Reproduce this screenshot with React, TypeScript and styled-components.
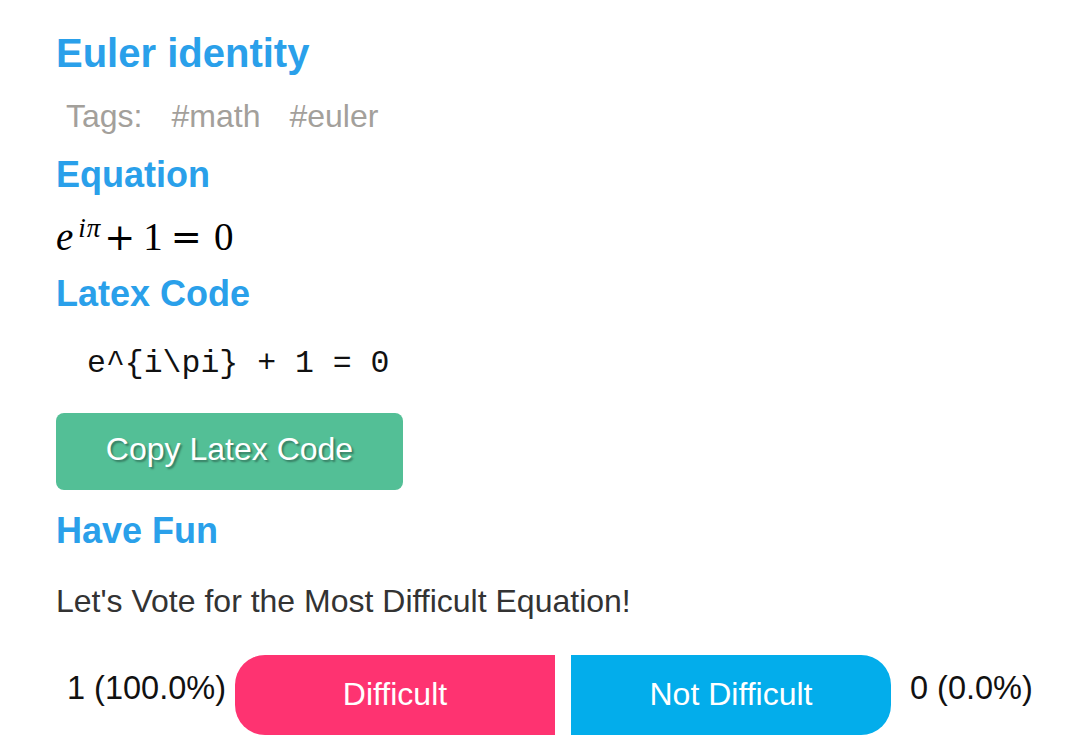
import React from "react";
import styled, { createGlobalStyle } from "styled-components";

const GlobalStyle = createGlobalStyle`
  html, body {
    margin: 0;
    padding: 0;
    background: #ffffff;
    font-family: "Liberation Sans", Arial, Helvetica, sans-serif;
  }
`;

const Page = styled.main`
  display: flex;
  flex-direction: column;
  align-items: flex-start;
  padding: 30px 0 40px 56px;
  width: 1068px;
  box-sizing: border-box;
`;

const Title = styled.h1`
  margin: 0;
  font-size: 40px;
  line-height: 46px;
  font-weight: 700;
  color: #2aa0ea;
`;

const TagRow = styled.div`
  display: flex;
  align-items: baseline;
  margin-top: 22px;
  padding-left: 10px;
  font-size: 32px;
  line-height: 36px;
  color: #a3a09b;
`;

const Tag = styled.span<{ $gap: number }>`
  margin-right: ${(p) => p.$gap}px;
`;

const Heading = styled.h2<{ $top: number }>`
  margin: ${(p) => p.$top}px 0 0 0;
  font-size: 36px;
  line-height: 42px;
  font-weight: 700;
  color: #2aa0ea;
`;

const Formula = styled.div`
  margin-top: 19px;
  font-family: "Liberation Serif", "Times New Roman", serif;
  font-size: 39px;
  line-height: 44px;
  height: 44px;
  color: #000;
  white-space: nowrap;
`;

const MathVar = styled.span`
  font-style: italic;
`;

const Sup = styled.span`
  display: inline-block;
  font-size: 27px;
  font-style: italic;
  line-height: 1;
  vertical-align: 13px;
  margin-left: 5px;
  letter-spacing: 1px;
`;

const Op = styled.span<{ $left: number; $right: number }>`
  display: inline-block;
  font-family: "DejaVu Serif", serif;
  font-size: 37px;
  margin: 0 ${(p) => p.$right}px 0 ${(p) => p.$left}px;
`;

const Digit = styled.span`
  display: inline-block;
`;

const Code = styled.pre`
  margin: 30px 0 0 0;
  padding-left: 31px;
  font-family: "Liberation Mono", "Courier New", monospace;
  font-size: 31.5px;
  line-height: 38px;
  color: #111;
`;

const CopyButton = styled.button`
  margin-top: 30px;
  width: 347px;
  height: 77px;
  border: none;
  border-radius: 8px;
  background: #53bf96;
  color: #fff;
  font-family: "Liberation Sans", Arial, sans-serif;
  font-size: 32px;
  text-shadow: 2px 2px 2px rgba(0, 0, 0, 0.35);
  cursor: pointer;
  display: flex;
  align-items: center;
  justify-content: center;
  padding: 0 0 4px 0;
`;

const Prompt = styled.p`
  margin: 31px 0 0 0;
  font-size: 32px;
  line-height: 37px;
  color: #333;
`;

const VoteRow = styled.div`
  display: flex;
  align-items: flex-start;
  margin-top: 35px;
  padding-left: 11px;
`;

const Count = styled.span<{ $ml: number; $mr: number }>`
  flex-shrink: 0;
  white-space: nowrap;
  font-size: 32.5px;
  line-height: 37px;
  color: #111;
  padding-top: 15px;
  margin-left: ${(p) => p.$ml}px;
  margin-right: ${(p) => p.$mr}px;
`;

const VoteButton = styled.button<{ $color: string; $side: "left" | "right" }>`
  flex-shrink: 0;
  width: 320px;
  height: 80px;
  border: none;
  background: ${(p) => p.$color};
  color: #fff;
  font-family: "Liberation Sans", Arial, sans-serif;
  font-size: 32px;
  border-radius: ${(p) => (p.$side === "left" ? "30px 0 0 30px" : "0 30px 30px 0")};
  margin-left: ${(p) => (p.$side === "left" ? 0 : 16)}px;
  display: flex;
  align-items: center;
  justify-content: center;
  padding: 0 0 2px 0;
  cursor: pointer;
`;

export default function App() {
  return (
    <>
      <GlobalStyle />
      <Page>
        <Title>Euler identity</Title>
        <TagRow>
          <Tag $gap={29}>Tags:</Tag>
          <Tag $gap={29}>#math</Tag>
          <Tag $gap={0}>#euler</Tag>
        </TagRow>
        <Heading $top={20}>Equation</Heading>
        <Formula>
          <MathVar>e</MathVar>
          <Sup>iπ</Sup>
          <Op $left={3} $right={8}>+</Op>
          <Digit>1</Digit>
          <Op $left={8} $right={12}>=</Op>
          <Digit>0</Digit>
        </Formula>
        <Heading $top={14}>Latex Code</Heading>
        <Code>{"e^{i\\pi} + 1 = 0"}</Code>
        <CopyButton>Copy Latex Code</CopyButton>
        <Heading $top={20}>Have Fun</Heading>
        <Prompt>Let's Vote for the Most Difficult Equation!</Prompt>
        <VoteRow>
          <Count $ml={0} $mr={9}>1 (100.0%)</Count>
          <VoteButton $color="#fe3371" $side="left">Difficult</VoteButton>
          <VoteButton $color="#03adeb" $side="right">Not Difficult</VoteButton>
          <Count $ml={19} $mr={0}>0 (0.0%)</Count>
        </VoteRow>
      </Page>
    </>
  );
}
